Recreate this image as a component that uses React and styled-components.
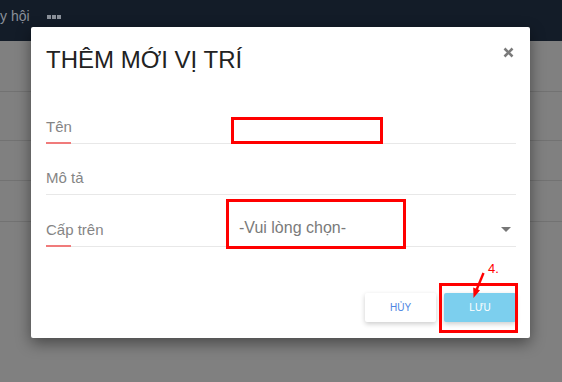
import React from "react";
import styled, { createGlobalStyle } from "styled-components";

const GlobalStyle = createGlobalStyle`
  html, body {
    margin: 0;
    padding: 0;
    overflow: hidden;
  }
  body {
    font-family: "Liberation Sans", Arial, sans-serif;
  }
  * {
    box-sizing: border-box;
  }
`;

const Page = styled.div`
  width: 562px;
  height: 382px;
  background: #808080;
  position: relative;
  overflow: hidden;
`;

const NavBar = styled.div`
  height: 41px;
  background: #131c28;
  display: flex;
  align-items: flex-start;
  padding-top: 8px;
  gap: 17px;
`;

const NavText = styled.span`
  font-size: 14px;
  color: #8a9099;
  line-height: 17px;
`;

const Dots = styled.span`
  display: flex;
  gap: 1px;
  margin-top: 7px;

  i {
    display: block;
    width: 4px;
    height: 4px;
    background: #8a9099;
  }
`;

const BgRow = styled.div`
  height: ${(p) => p.$h}px;
  border-bottom: 1px solid #727272;
`;

const Backdrop = styled.div`
  position: absolute;
  inset: 0;
  padding: 27px 0 0 31px;
`;

const Modal = styled.div`
  position: relative;
  width: 499px;
  height: 311px;
  background: #fff;
  border-radius: 2px;
  box-shadow: 0 5px 15px rgba(0, 0, 0, 0.45);
`;

const Header = styled.div`
  height: 65px;
  display: flex;
  justify-content: space-between;
  align-items: flex-start;
  padding: 19px 16px 0 15px;
`;

const Title = styled.h4`
  margin: 0;
  font-size: 24px;
  font-weight: 400;
  color: #222;
  line-height: normal;
`;

const Close = styled.button`
  border: 0;
  background: none;
  padding: 0;
  margin-top: 1px;
  width: 11px;
  height: 11px;
  display: flex;
  cursor: pointer;
`;

const Body = styled.div`
  padding: 0 14px 0 15px;
`;

const Row = styled.div`
  height: ${(p) => p.$h}px;
  display: flex;
  align-items: flex-end;
  border-bottom: 1px solid #e8e8e8;
`;

const Label = styled.label`
  width: 193px;
  flex: none;
  display: flex;
  flex-direction: column;
  font-size: 15px;
  color: #858585;
  margin-bottom: ${(p) => (p.$required ? "-1px" : "8px")};

  &::after {
    content: "";
    display: ${(p) => (p.$required ? "block" : "none")};
    width: 25px;
    height: 2px;
    margin-top: 7px;
    background: #f07b7b;
  }
`;

const Select = styled.div`
  flex: 1;
  display: flex;
  align-items: center;
  justify-content: space-between;
  padding-bottom: 9px;
  font-size: 16px;
  color: #7a7a7a;
`;

const Caret = styled.span`
  width: 0;
  height: 0;
  margin-right: 5px;
  margin-top: 3px;
  border-left: 5px solid transparent;
  border-right: 5px solid transparent;
  border-top: 5px solid #777;
`;

const Footer = styled.div`
  display: flex;
  justify-content: flex-end;
  gap: 8px;
  padding: 46px 14px 0;
`;

const Button = styled.button`
  width: ${(p) => (p.$primary ? 72 : 71)}px;
  height: 29px;
  border: 0;
  border-radius: 2px;
  font-family: "Liberation Sans", Arial, sans-serif;
  font-size: 10px;
  text-transform: uppercase;
  background: ${(p) => (p.$primary ? "#7ccfee" : "#fff")};
  color: ${(p) => (p.$primary ? "#fff" : "#4e86e2")};
  box-shadow: 0 2px 5px rgba(0, 0, 0, 0.2);
  cursor: pointer;
`;

const Mark = styled.div`
  position: absolute;
  left: ${(p) => p.$x}px;
  top: ${(p) => p.$y}px;
  width: ${(p) => p.$w}px;
  height: ${(p) => p.$h}px;
  border: 3px solid #f00;
  pointer-events: none;
`;

const Step = styled.span`
  position: absolute;
  left: 457px;
  top: 234px;
  font-size: 13px;
  color: #f00;
`;

const Arrow = styled.svg`
  position: absolute;
  left: 439px;
  top: 241px;
`;

export default function App() {
  return (
    <Page>
      <GlobalStyle />
      <NavBar>
        <NavText>y hội</NavText>
        <Dots>
          <i />
          <i />
          <i />
        </Dots>
      </NavBar>
      <BgRow $h={51} />
      <BgRow $h={49} />
      <BgRow $h={40} />
      <BgRow $h={41} />

      <Backdrop>
        <Modal>
          <Header>
            <Title>THÊM MỚI VỊ TRÍ</Title>
            <Close aria-label="Đóng">
              <svg width="11" height="11" viewBox="0 0 11 11">
                <path d="M1.5 1.5 L9.5 9.5 M9.5 1.5 L1.5 9.5" stroke="#7b7b7b" strokeWidth="2.6" />
              </svg>
            </Close>
          </Header>
          <Body>
            <Row $h={52}>
              <Label $required>Tên</Label>
            </Row>
            <Row $h={51}>
              <Label>Mô tả</Label>
            </Row>
            <Row $h={52}>
              <Label $required>Cấp trên</Label>
              <Select>
                -Vui lòng chọn-
                <Caret />
              </Select>
            </Row>
          </Body>
          <Footer>
            <Button>Hủy</Button>
            <Button $primary>Lưu</Button>
          </Footer>

          <Mark $x={200} $y={90} $w={152} $h={27} />
          <Mark $x={195} $y={172} $w={180} $h={50} />
          <Mark $x={408} $y={256} $w={79} $h={50} />
          <Step>4.</Step>
          <Arrow width="20" height="32" viewBox="0 0 20 32">
            <path d="M13.5 5 L6.5 22" stroke="#f00" strokeWidth="2.4" />
            <path d="M3.5 30 L3.2 19.5 L10 22.3 Z" fill="#f00" />
          </Arrow>
        </Modal>
      </Backdrop>
    </Page>
  );
}
